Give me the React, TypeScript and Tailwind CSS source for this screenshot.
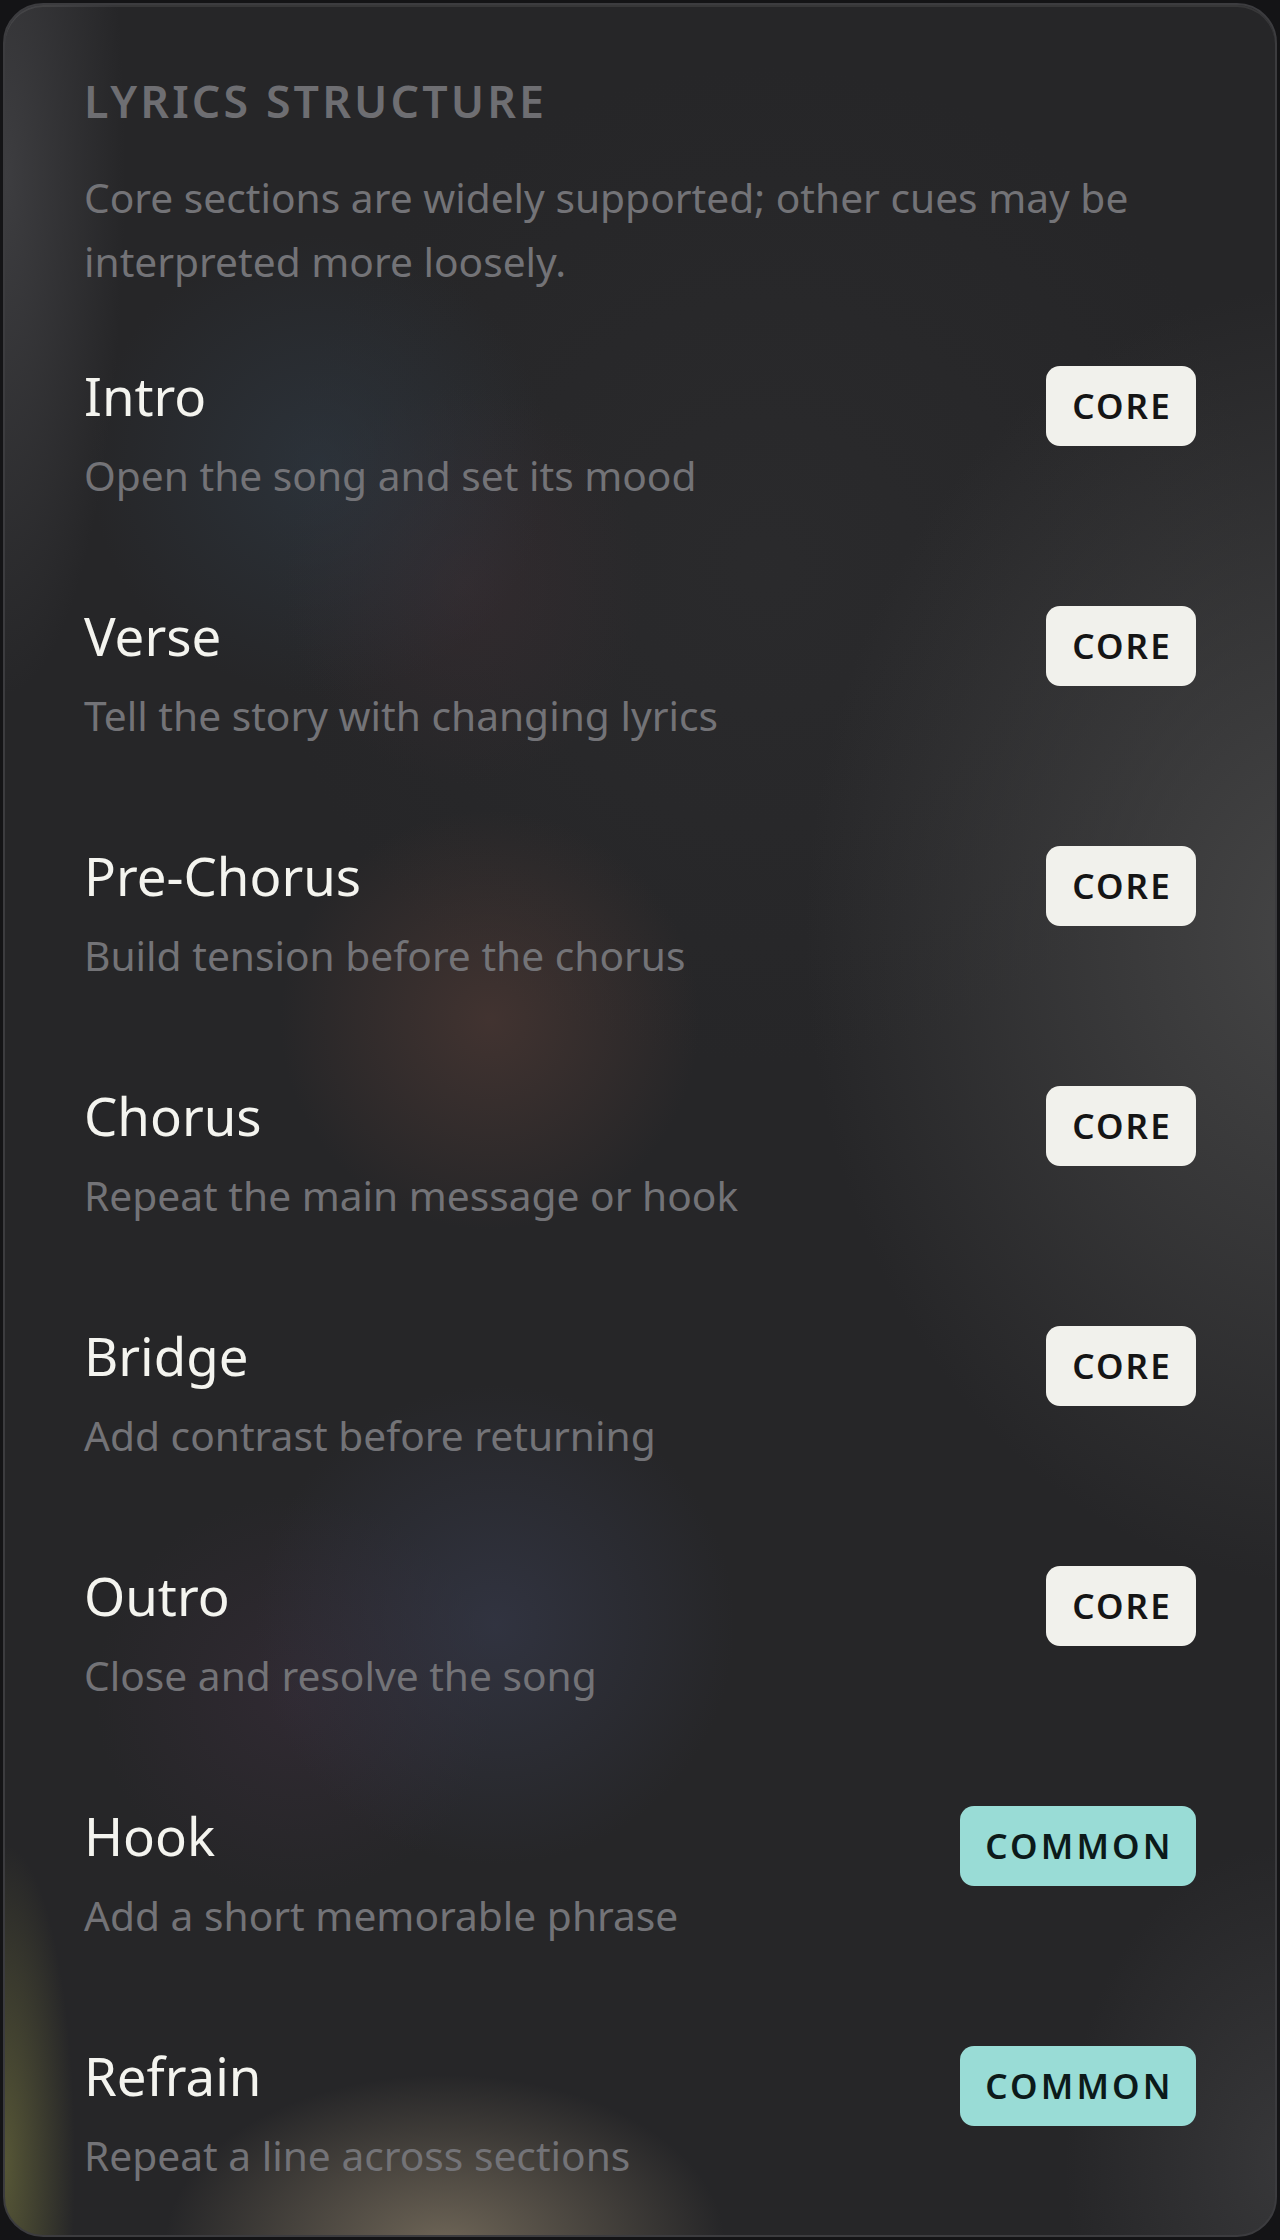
import React from "react";

type Row = { title: string; desc: string; tag: "CORE" | "COMMON" };

const rows: Row[] = [
  { title: "Intro", desc: "Open the song and set its mood", tag: "CORE" },
  { title: "Verse", desc: "Tell the story with changing lyrics", tag: "CORE" },
  { title: "Pre-Chorus", desc: "Build tension before the chorus", tag: "CORE" },
  { title: "Chorus", desc: "Repeat the main message or hook", tag: "CORE" },
  { title: "Bridge", desc: "Add contrast before returning", tag: "CORE" },
  { title: "Outro", desc: "Close and resolve the song", tag: "CORE" },
  { title: "Hook", desc: "Add a short memorable phrase", tag: "COMMON" },
  { title: "Refrain", desc: "Repeat a line across sections", tag: "COMMON" },
];

function Badge({ tag }: { tag: Row["tag"] }) {
  if (tag === "CORE") {
    return (
      <span className="mt-[1px] flex h-[80px] w-[150px] shrink-0 items-center justify-center rounded-[14px] bg-[#f1f1ec] pl-[2px] text-[35px] font-semibold tracking-[0.06em] text-[#151515]">
        CORE
      </span>
    );
  }
  return (
    <span className="mt-[1px] flex h-[80px] w-[236px] shrink-0 items-center justify-center rounded-[14px] bg-[#99dcd6] pl-[3px] text-[35px] font-semibold tracking-[0.09em] text-[#0c1a1a]">
      COMMON
    </span>
  );
}

export default function App() {
  return (
    <div
      className="min-h-[2240px] bg-[#141416] p-[3px]"
      style={{ fontFamily: '"Noto Sans", "Open Sans", sans-serif' }}
    >
      <div className="h-[2234px] overflow-hidden rounded-[40px] border-[2px] border-[#3c3c3f] bg-[#262628] bg-[radial-gradient(120px_520px_at_0px_170px,rgba(84,84,88,0.5),transparent),radial-gradient(230px_230px_at_315px_460px,rgba(48,60,72,0.55),transparent),radial-gradient(180px_200px_at_460px_580px,rgba(62,46,52,0.45),transparent),radial-gradient(210px_210px_at_485px_1015px,rgba(84,60,54,0.6),transparent),radial-gradient(520px_650px_at_1320px_930px,rgba(80,80,80,0.75),transparent),radial-gradient(240px_240px_at_490px_1620px,rgba(56,60,80,0.6),transparent),radial-gradient(200px_200px_at_290px_1690px,rgba(60,46,62,0.45),transparent),radial-gradient(70px_320px_at_0px_2160px,rgba(112,112,62,0.65),transparent),radial-gradient(280px_170px_at_440px_2240px,rgba(134,122,102,0.75),transparent),radial-gradient(220px_320px_at_1280px_2160px,rgba(72,72,74,0.5),transparent),radial-gradient(500px_500px_at_760px_560px,rgba(50,50,52,0.35),transparent)] shadow-[inset_0_2px_0_rgba(255,255,255,0.08)]">
        <div className="px-[79px] pt-[74px]">
          <h2 className="text-[44.7px] font-semibold leading-[44px] tracking-[0.07em] text-[#6e6e72]">
            LYRICS STRUCTURE
          </h2>
          <p className="mt-[42px] text-[40.7px] leading-[64px] text-[#737377]">
            Core sections are widely supported; other cues may be interpreted more loosely.
          </p>

          <div className="mt-[72px] flex flex-col gap-[98px]">
            {rows.map((r) => (
              <div key={r.title} className="flex items-start justify-between">
                <div className="flex flex-col">
                  <span className="text-[52.8px] leading-[62px] text-[#f4f4ef]">{r.title}</span>
                  <span className="mt-[16px] text-[40.7px] leading-[64px] text-[#737377]">{r.desc}</span>
                </div>
                <Badge tag={r.tag} />
              </div>
            ))}
          </div>
        </div>
      </div>
    </div>
  );
}
